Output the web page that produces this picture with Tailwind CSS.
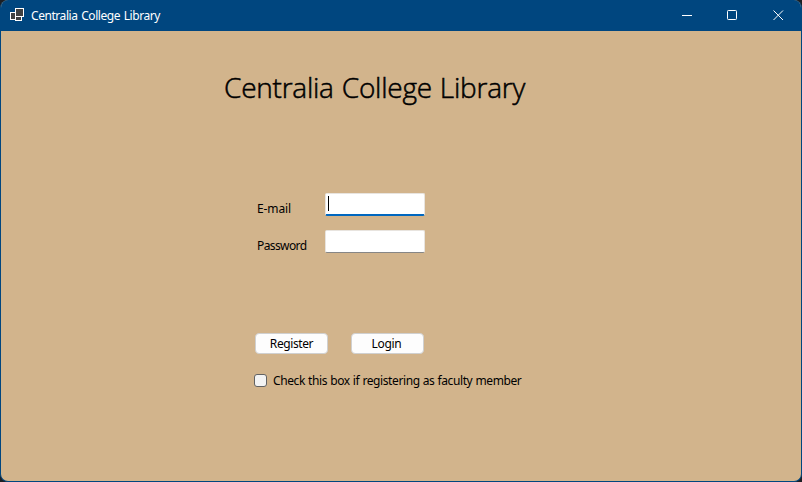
<!DOCTYPE html>
<html lang="en">
<head>
<meta charset="utf-8">
<title>Centralia College Library</title>
<script src="https://cdn.jsdelivr.net/npm/@tailwindcss/browser@4"></script>
</head>
<body class="bg-[#1c1f24]">
<div class="w-[802px] h-[482px] flex flex-col overflow-hidden rounded-lg border border-t-0 border-[#00467f] bg-[#d2b48c] font-['Noto_Sans','Open_Sans',sans-serif] text-black text-[12px] leading-4">
  <header class="h-[31px] shrink-0 bg-[#00467f] flex items-center text-white">
    <svg class="ml-[9px] w-[14px] h-[14px] -mt-[2px] shrink-0" viewBox="0 0 14 14" shape-rendering="crispEdges" fill="#404040" stroke="#fff">
      <rect x=".5" y="4.500" width="6" height="7"/><rect x="5.500" y="8.500" width="6" height="4"/><rect x="5.500" y=".5" width="8" height="8"/>
    </svg>
    <span class="ml-[7px] whitespace-nowrap tracking-[-0.44px] [word-spacing:1px]">Centralia College Library</span>
    <div class="ml-auto flex">
      <svg class="w-[45px] h-[31px]" viewBox="0 0 45 31" stroke="#fff" fill="none"><path d="M17 15.500h10"/></svg>
      <svg class="w-[46px] h-[31px]" viewBox="0 0 46 31" stroke="#fff" fill="none"><rect x="17.500" y="10.500" width="9" height="9" rx=".8"/></svg>
      <svg class="w-[45px] h-[31px]" viewBox="0 0 45 31" stroke="#fff" fill="none"><path d="M17.500 10.500l9.500 9.500M27 10.500l-9.500 9.500"/></svg>
    </div>
  </header>
  <main class="flex flex-col items-start">
    <h1 class="ml-[223px] mt-[36px] h-10 leading-10 text-[28px] whitespace-nowrap tracking-[-0.24px] [word-spacing:1px] font-light [-webkit-text-stroke:0.5px_black] font-['Open_Sans','Noto_Sans',sans-serif]">Centralia College Library</h1>
    <form class="mt-[86px] ml-[253px] flex flex-col items-start">
      <div class="grid grid-cols-[68px_100px] ml-[3px] gap-x-0 gap-y-[14px]">
        <label class="mt-2 h-[15px] whitespace-nowrap tracking-[-0.1px]">E-mail</label>
        <div class="h-[23px] w-[100px] rounded-[2px] bg-white border border-[#e8e4df] border-b-2 border-b-[#0067c0] pl-[2px] pt-[2px]"><div class="w-px h-[15px] bg-black"></div></div>
        <label class="mt-2 h-[15px] whitespace-nowrap tracking-[-0.6px]">Password</label>
        <div class="h-[23px] w-[100px] rounded-[2px] bg-white border border-[#e8e4df] border-b-[#868686]"></div>
      </div>
      <div class="mt-[80px] ml-px flex gap-[23px]">
        <button type="button" class="w-[73px] h-[21px] rounded-[4px] bg-[#fdfdfd] border border-[#d0d0d0] leading-[19px] tracking-[-0.4px]">Register</button>
        <button type="button" class="w-[73px] h-[21px] rounded-[4px] bg-[#fdfdfd] border border-[#d0d0d0] leading-[19px] tracking-[-0.3px] pr-[2px]">Login</button>
      </div>
      <label class="mt-[18px] flex items-center">
        <span class="w-[13px] h-[13px] rounded-[3px] bg-[#f3f3f3] border border-[#626262]"></span>
        <span class="ml-[6px] pt-px whitespace-nowrap tracking-[-0.4px] [word-spacing:0.4px]">Check this box if registering as faculty member</span>
      </label>
    </form>
  </main>
</div>
</body>
</html>
